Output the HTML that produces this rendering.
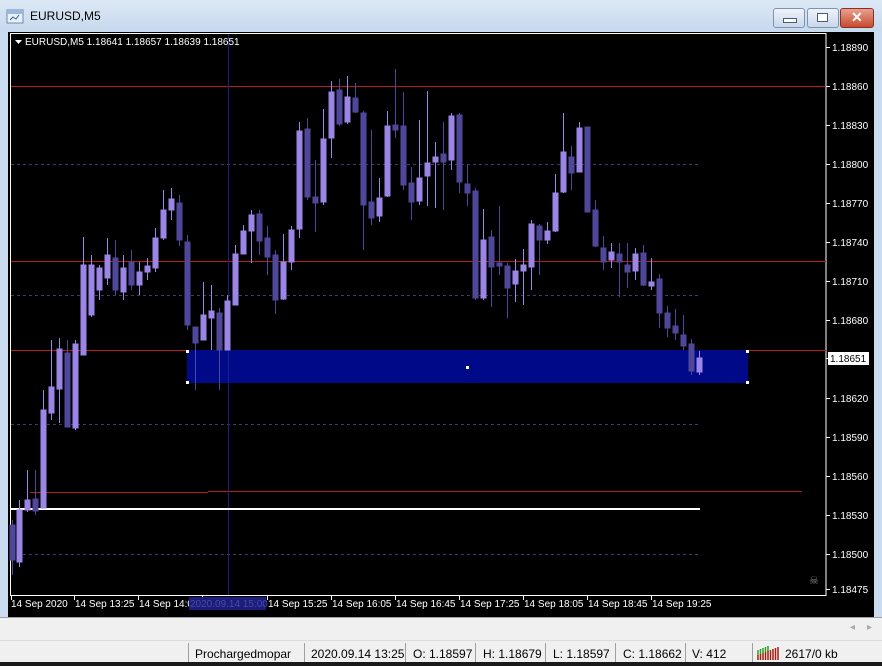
<!DOCTYPE html>
<html><head><meta charset="utf-8"><style>
body{margin:0;width:882px;height:666px;overflow:hidden;background:#c9dcf0;font-family:"Liberation Sans",sans-serif;position:relative}
.title{position:absolute;left:0;top:0;width:882px;height:31px;background:linear-gradient(#dce8f5,#c7d9ee)}
.title .t{position:absolute;left:30px;top:9px;font-size:12px;color:#000}
.btn{position:absolute;top:8px;height:18px;border:1px solid #7f93b0;border-radius:3px;background:linear-gradient(#eef3fa,#c9d7ea)}
svg{position:absolute;left:0;top:0}
.gray{position:absolute;left:0;top:617px;width:882px;height:23px;background:#f0f0f0;border-top:1px solid #a0a0a0}
.status{position:absolute;left:0;top:640px;width:882px;height:22px;background:#f0f0f0;border-top:1px solid #dcdcdc;font-size:12px;color:#000}
.status span{position:absolute;top:6px}
.sep{position:absolute;top:2px;width:1px;height:19px;background:#a0a0a0}
.bot{position:absolute;left:0;top:662px;width:882px;height:4px;background:#1a1a1a}
</style></head><body>
<div class="title">
<svg width="20" height="16" style="left:6px;top:9px"><rect x="1" y="1" width="16" height="13" fill="#e8f0f8" stroke="#6a8ab0"/><rect x="1" y="1" width="16" height="4" fill="#9cb8d8"/><path d="M4 11l3-3 3 2 3-4" stroke="#3a6090" fill="none"/></svg>
<div class="t">EURUSD,M5</div>
<div class="btn" style="left:773px;width:30px"><div style="position:absolute;left:9px;top:9px;width:12px;height:3px;background:#fff;border:1px solid #4a5a78"></div></div>
<div class="btn" style="left:807px;width:30px"><div style="position:absolute;left:9px;top:4px;width:9px;height:7px;border:1px solid #4a5a78;background:#fff"></div></div>
<div class="btn" style="left:840px;width:32px;background:linear-gradient(#e8a090,#c84a30);border-color:#8a3020"><div style="position:absolute;left:10px;top:0;color:#fff;font-weight:bold;font-size:14px">✕</div></div>
</div>
<svg width="882" height="617" viewBox="0 0 882 617">
<rect x="0" y="31" width="882" height="586" fill="#c9dcf0"/>
<rect x="8" y="32" width="866" height="585" fill="#000"/>
<rect x="10.5" y="33.5" width="815.5" height="562" fill="none" stroke="#fff"/>
<g stroke="#3c3c70" stroke-dasharray="3,3"><path d="M11 164.5H700M11 295.5H700M11 424.5H700M11 554.5H700"/></g>
<g fill="#b81c1c"><rect x="11" y="86" width="815" height="1"/><rect x="11" y="261" width="815" height="1"/><rect x="11" y="350" width="815" height="1"/><rect x="30" y="492" width="178" height="1"/><rect x="208" y="491" width="594" height="1"/></g>
<rect x="187" y="350" width="561" height="33" fill="#000a88"/>
<path d="M228.5 34V595" stroke="#1c1c8a"/>
<path d="M11 509H700" stroke="#fff" stroke-width="2"/>
<g id="c">
<g fill="#4f479a" stroke="#4f479a">
<path d="M12.5 520V575M35.5 470V515M67.5 340V427M115.5 240V295M131.5 250V290M179.5 195V246M187.5 235V330M195.5 327V390M219.5 308V390M259.5 210V255M267.5 226V275M275.5 250V314M307.5 118V200M315.5 160V232M339.5 79V126M355.5 83V113M363.5 111V250M371.5 130V225M395.5 69V138M403.5 92V190M411.5 167V220M443.5 122V210M459.5 113V193M467.5 165V206M475.5 188V300M491.5 230V307M499.5 206V275M507.5 263V318M539.5 224V275M571.5 146V190M587.5 127V212M595.5 200V247M603.5 236V270M619.5 243V297M627.5 243V288M643.5 245V286M659.5 274V328M667.5 306V337M675.5 309V340M683.5 315V350M691.5 339V375" stroke-width="1"/>
<rect x="10" y="525" width="5" height="35"/><rect x="33" y="499" width="5" height="12"/><rect x="65" y="353" width="5" height="74"/><rect x="113" y="258" width="5" height="32"/><rect x="129" y="262" width="5" height="23"/><rect x="177" y="203" width="5" height="37"/><rect x="185" y="242" width="5" height="83"/><rect x="193" y="327" width="5" height="16"/><rect x="217" y="313" width="5" height="37"/><rect x="257" y="214" width="5" height="27"/><rect x="265" y="238" width="5" height="19"/><rect x="273" y="255" width="5" height="45"/><rect x="305" y="129" width="5" height="68"/><rect x="313" y="197" width="5" height="6"/><rect x="337" y="90" width="5" height="34"/><rect x="353" y="98" width="5" height="14"/><rect x="361" y="113" width="5" height="92"/><rect x="369" y="202" width="5" height="16"/><rect x="393" y="125" width="5" height="5"/><rect x="401" y="126" width="5" height="59"/><rect x="409" y="183" width="5" height="19"/><rect x="441" y="154" width="5" height="8"/><rect x="457" y="115" width="5" height="67"/><rect x="465" y="184" width="5" height="9"/><rect x="473" y="191" width="5" height="107"/><rect x="489" y="237" width="5" height="30"/><rect x="497" y="263" width="5" height="3"/><rect x="505" y="266" width="5" height="22"/><rect x="537" y="226" width="5" height="14"/><rect x="569" y="157" width="5" height="16"/><rect x="585" y="127" width="5" height="85"/><rect x="593" y="210" width="5" height="36"/><rect x="601" y="248" width="5" height="14"/><rect x="617" y="254" width="5" height="8"/><rect x="625" y="265" width="5" height="7"/><rect x="641" y="253" width="5" height="32"/><rect x="657" y="279" width="5" height="34"/><rect x="665" y="313" width="5" height="15"/><rect x="673" y="326" width="5" height="7"/><rect x="681" y="335" width="5" height="11"/><rect x="689" y="344" width="5" height="27"/>
</g>
<g fill="#9b85e6" stroke="#9b85e6">
<path d="M19.5 500V567M27.5 470V512M43.5 390V508M51.5 340V420M59.5 338V423M75.5 340V430M83.5 237V350M91.5 255V317M99.5 265V300M107.5 238V285M123.5 255V300M139.5 262V295M147.5 258V280M155.5 228V272M163.5 190V240M171.5 188V220M203.5 282V340M211.5 285V350M227.5 295V350M235.5 245V305M243.5 225V254M251.5 210V263M283.5 234V300M291.5 226V270M299.5 122V238M323.5 109V205M331.5 81V158M347.5 76V124M379.5 178V222M387.5 111V197M419.5 120V205M427.5 91V206M435.5 142V208M451.5 113V170M483.5 209V300M515.5 259V302M523.5 249V305M531.5 220V290M547.5 222V244M555.5 174V232M563.5 113V193M579.5 122V172M611.5 243V268M635.5 248V280M651.5 258V290M699.5 351V375" stroke-width="1"/>
<rect x="17" y="510" width="5" height="52"/><rect x="25" y="500" width="5" height="10"/><rect x="41" y="410" width="5" height="98"/><rect x="49" y="387" width="5" height="26"/><rect x="57" y="349" width="5" height="40"/><rect x="73" y="344" width="5" height="84"/><rect x="81" y="265" width="5" height="90"/><rect x="89" y="265" width="5" height="50"/><rect x="97" y="268" width="5" height="22"/><rect x="105" y="255" width="5" height="23"/><rect x="121" y="268" width="5" height="24"/><rect x="137" y="272" width="5" height="13"/><rect x="145" y="266" width="5" height="6"/><rect x="153" y="238" width="5" height="30"/><rect x="161" y="210" width="5" height="28"/><rect x="169" y="199" width="5" height="11"/><rect x="201" y="315" width="5" height="25"/><rect x="209" y="311" width="5" height="7"/><rect x="225" y="301" width="5" height="49"/><rect x="233" y="254" width="5" height="51"/><rect x="241" y="231" width="5" height="23"/><rect x="249" y="215" width="5" height="16"/><rect x="281" y="262" width="5" height="37"/><rect x="289" y="230" width="5" height="32"/><rect x="297" y="131" width="5" height="98"/><rect x="321" y="139" width="5" height="63"/><rect x="329" y="92" width="5" height="46"/><rect x="345" y="97" width="5" height="25"/><rect x="377" y="198" width="5" height="18"/><rect x="385" y="126" width="5" height="70"/><rect x="417" y="178" width="5" height="23"/><rect x="425" y="163" width="5" height="13"/><rect x="433" y="157" width="5" height="5"/><rect x="449" y="116" width="5" height="44"/><rect x="481" y="240" width="5" height="58"/><rect x="513" y="271" width="5" height="13"/><rect x="521" y="265" width="5" height="6"/><rect x="529" y="224" width="5" height="43"/><rect x="545" y="231" width="5" height="9"/><rect x="553" y="193" width="5" height="38"/><rect x="561" y="152" width="5" height="40"/><rect x="577" y="128" width="5" height="44"/><rect x="609" y="252" width="5" height="8"/><rect x="633" y="254" width="5" height="17"/><rect x="649" y="282" width="5" height="4"/><rect x="697" y="358" width="5" height="14"/>
</g>
</g>
<g fill="#fff"><rect x="186" y="350" width="3" height="3"/><rect x="186" y="381" width="3" height="3"/><rect x="466" y="366" width="3" height="3"/><rect x="746" y="350" width="3" height="3"/><rect x="746" y="381" width="3" height="3"/></g>
<g stroke="#fff"><path d="M826 47.5h4M826 86.5h4M826 125.5h4M826 164.5h4M826 203.5h4M826 242.5h4M826 281.5h4M826 320.5h4M826 358.5h4M826 398.5h4M826 437.5h4M826 476.5h4M826 515.5h4M826 554.5h4M826 589.5h4"/>
<path d="M11.5 596v4M74.5 596v4M138.5 596v4M202.5 596v4M267.5 596v4M331.5 596v4M395.5 596v4M459.5 596v4M523.5 596v4M587.5 596v4M651.5 596v4"/></g>
<rect x="828" y="352" width="41" height="13" fill="#fff"/>
<g font-family="Liberation Sans, sans-serif" font-size="10" fill="#fff">
<text x="832" y="51">1.18890</text><text x="832" y="90">1.18860</text><text x="832" y="129">1.18830</text><text x="832" y="168">1.18800</text><text x="832" y="207">1.18770</text><text x="832" y="246">1.18740</text><text x="832" y="285">1.18710</text><text x="832" y="324">1.18680</text><text x="830" y="362" fill="#000">1.18651</text><text x="832" y="402">1.18620</text><text x="832" y="441">1.18590</text><text x="832" y="480">1.18560</text><text x="832" y="519">1.18530</text><text x="832" y="558">1.18500</text><text x="832" y="593">1.18475</text>
<text x="11" y="607">14 Sep 2020</text><text x="75" y="607">14 Sep 13:25</text><text x="139" y="607">14 Sep 14:0</text>
<rect x="189" y="597" width="77" height="13" fill="#1c1c7a"/><text x="190" y="607" fill="#4a4aa8">2020.09.14 15:00</text>
<text x="268" y="607">14 Sep 15:25</text><text x="332" y="607">14 Sep 16:05</text><text x="396" y="607">14 Sep 16:45</text><text x="460" y="607">14 Sep 17:25</text><text x="524" y="607">14 Sep 18:05</text><text x="588" y="607">14 Sep 18:45</text><text x="652" y="607">14 Sep 19:25</text>
<path d="M15 40h7l-3.5 4z"/>
<text x="25" y="45">EURUSD,M5  1.18641 1.18657 1.18639 1.18651</text>
<text x="809" y="584" fill="#888" font-size="11">☠</text>
</g>
</svg>
<div class="gray"><span style="position:absolute;left:850px;top:4px;font-size:10px;color:#aaa">◂</span><span style="position:absolute;left:867px;top:4px;font-size:10px;color:#aaa">▸</span></div>
<div class="status">
<div class="sep" style="left:188px"></div><span style="left:195px">Prochargedmopar</span>
<div class="sep" style="left:304px"></div><span style="left:311px">2020.09.14 13:25</span>
<div class="sep" style="left:405px"></div><span style="left:413px">O: 1.18597</span>
<div class="sep" style="left:475px"></div><span style="left:483px">H: 1.18679</span>
<div class="sep" style="left:545px"></div><span style="left:553px">L: 1.18597</span>
<div class="sep" style="left:615px"></div><span style="left:623px">C: 1.18662</span>
<div class="sep" style="left:685px"></div><span style="left:692px">V: 412</span>
<div class="sep" style="left:752px"></div>
<svg width="24" height="14" style="left:757px;top:5px"><g stroke-width="1.5"><path d="M1 14V9M3.5 14V8M6 14V7M8.5 14V6M11 14V5M13.5 14V4M16 14V3M18.5 14V2M21 14V1" stroke="#a02010"/><path d="M1 9V4M3.5 8V3M6 7V2M8.5 6V1M11 5V0" stroke="#30a020"/></g></svg>
<span style="left:785px">2617/0 kb</span>
</div>
<div class="bot"></div>
</body></html>
